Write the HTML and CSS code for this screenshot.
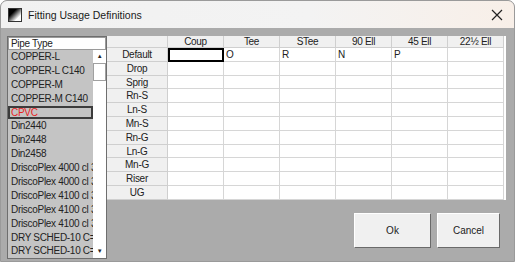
FILE: index.html
```html
<!DOCTYPE html>
<html lang="en">
<head>
    <meta charset="UTF-8">
    <title>Fitting Usage Definitions</title>
    <link rel="stylesheet" href="styles.css">
</head>
<body>

<div class="window">
    <div class="titlebar">
        <span class="app-icon"></span>
        <span class="title">Fitting Usage Definitions</span>
        <svg class="close" width="12" height="12" viewBox="0 0 12 12">
            <path d="M1 1 L11 11 M11 1 L1 11" stroke="#222" stroke-width="1.2" fill="none"/>
        </svg>
    </div>

    <div class="content">
        <div class="listbox">
            <div class="list-header">Pipe Type</div>
            <div class="list-body">
                <div class="list-items">
                    <div class="item">COPPER-L</div>
                    <div class="item">COPPER-L C140</div>
                    <div class="item">COPPER-M</div>
                    <div class="item">COPPER-M C140</div>
                    <div class="item selected">CPVC</div>
                    <div class="item">Din2440</div>
                    <div class="item">Din2448</div>
                    <div class="item">Din2458</div>
                    <div class="item">DriscoPlex 4000 cl 3</div>
                    <div class="item">DriscoPlex 4000 cl 3</div>
                    <div class="item">DriscoPlex 4100 cl 3</div>
                    <div class="item">DriscoPlex 4100 cl 3</div>
                    <div class="item">DriscoPlex 4100 cl 3</div>
                    <div class="item">DRY SCHED-10 C=</div>
                    <div class="item">DRY SCHED-10 C=</div>
                </div>
                <div class="scrollbar">
                    <div class="arrow">&#9650;</div>
                    <div class="thumb"></div>
                    <div class="track"></div>
                    <div class="arrow">&#9660;</div>
                </div>
            </div>
        </div>

        <div class="right">
            <div class="grid">
                <div class="hd corner"></div>
                <div class="hd">Coup</div>
                <div class="hd">Tee</div>
                <div class="hd">STee</div>
                <div class="hd">90 Ell</div>
                <div class="hd">45 Ell</div>
                <div class="hd">22½ Ell</div>

                <div class="rh">Default</div>
                <div class="cell current"></div>
                <div class="cell">O</div>
                <div class="cell">R</div>
                <div class="cell">N</div>
                <div class="cell">P</div>
                <div class="cell"></div>

                <div class="rh">Drop</div>
                <div class="cell"></div><div class="cell"></div><div class="cell"></div><div class="cell"></div><div class="cell"></div><div class="cell"></div>
                <div class="rh">Sprig</div>
                <div class="cell"></div><div class="cell"></div><div class="cell"></div><div class="cell"></div><div class="cell"></div><div class="cell"></div>
                <div class="rh">Rn-S</div>
                <div class="cell"></div><div class="cell"></div><div class="cell"></div><div class="cell"></div><div class="cell"></div><div class="cell"></div>
                <div class="rh">Ln-S</div>
                <div class="cell"></div><div class="cell"></div><div class="cell"></div><div class="cell"></div><div class="cell"></div><div class="cell"></div>
                <div class="rh">Mn-S</div>
                <div class="cell"></div><div class="cell"></div><div class="cell"></div><div class="cell"></div><div class="cell"></div><div class="cell"></div>
                <div class="rh">Rn-G</div>
                <div class="cell"></div><div class="cell"></div><div class="cell"></div><div class="cell"></div><div class="cell"></div><div class="cell"></div>
                <div class="rh">Ln-G</div>
                <div class="cell"></div><div class="cell"></div><div class="cell"></div><div class="cell"></div><div class="cell"></div><div class="cell"></div>
                <div class="rh">Mn-G</div>
                <div class="cell"></div><div class="cell"></div><div class="cell"></div><div class="cell"></div><div class="cell"></div><div class="cell"></div>
                <div class="rh">Riser</div>
                <div class="cell"></div><div class="cell"></div><div class="cell"></div><div class="cell"></div><div class="cell"></div><div class="cell"></div>
                <div class="rh">UG</div>
                <div class="cell"></div><div class="cell"></div><div class="cell"></div><div class="cell"></div><div class="cell"></div><div class="cell"></div>
            </div>

            <div class="btn-container">
                <button class="btn ok">Ok</button>
                <button class="btn cancel">Cancel</button>
            </div>
        </div>
    </div>
</div>

</body>
</html>
```

FILE: styles.css
```css
body {
    margin: 0;
    padding: 0;
    background-color: #ffffff;
    font-family: "Liberation Sans", Arial, sans-serif;
    color: #000;
}

.window {
    width: 515px;
    height: 262px;
    box-sizing: border-box;
    border: 1px solid #9a9a9a;
    border-radius: 7px 7px 0 0;
    overflow: hidden;
    background-color: #ababab;
}

/* barre de titre */
.titlebar {
    height: 27px;
    display: flex;
    align-items: center;
    padding-left: 7px;
    background: linear-gradient(to right, #f1f1f1 0%, #f3f3f3 60%, #f8efe8 100%);
}

.app-icon {
    width: 12px;
    height: 12px;
    border: 1px solid #333;
    background: linear-gradient(135deg, #000 0%, #000 30%, #fff 75%);
}

.title {
    margin-left: 6px;
    font-family: "Liberation Sans", Arial, sans-serif;
    font-size: 10.5px;
    color: #1a1a1a;
}

.close {
    margin-left: auto;
    margin-right: 11px;
}

.content {
    display: flex;
    padding: 8px 0 0 6px;
    font-size: 10px;
    letter-spacing: -0.3px;
    color: #222;
}

/* liste des types */
.listbox {
    width: 98px;
    height: 221px;
    border: 1px solid #6e6e6e;
    display: flex;
    flex-direction: column;
    background-color: #c4c4c4;
}

.list-header {
    height: 11px;
    line-height: 11px;
    background-color: #fff;
    border: 1px solid #9a9a9a;
    padding-left: 2px;
    white-space: nowrap;
}

.list-body {
    flex: 1;
    display: flex;
    overflow: hidden;
}

.list-items {
    flex: 1;
    overflow: hidden;
}

.item {
    height: 13.9px;
    line-height: 13.9px;
    padding-left: 3px;
    white-space: nowrap;
    overflow: hidden;
    box-sizing: border-box;
}

.item.selected {
    color: #e8231e;
    border: 2px solid #3c3c3c;
    padding-left: 1px;
    line-height: 10px;
}

.scrollbar {
    width: 13px;
    background-color: #fff;
    display: flex;
    flex-direction: column;
}

.arrow {
    height: 13px;
    font-size: 6px;
    line-height: 13px;
    text-align: center;
}

.thumb {
    height: 16px;
    border: 1px solid #a0a0a0;
    background-color: #fff;
}

.track {
    flex: 1;
}

/* tableau */
.right {
    flex: 1;
    display: flex;
    flex-direction: column;
}

.grid {
    width: 399px;
    display: grid;
    grid-template-columns: 61px repeat(6, 56px);
    grid-template-rows: 12px repeat(11, 13.8px);
    background-color: #fff;
}

.hd,
.rh {
    background-color: #f0f0f0;
    border-right: 1px solid #cfcfcf;
    border-bottom: 1px solid #cfcfcf;
    text-align: center;
    white-space: nowrap;
    overflow: hidden;
}

.hd {
    line-height: 11px;
}

.rh {
    line-height: 13px;
}

.cell {
    border-right: 1px solid #d6d6d6;
    border-bottom: 1px solid #d6d6d6;
    padding-left: 2px;
    line-height: 13px;
}

.cell.current {
    border: 2px solid #000;
}

.btn-container {
    display: flex;
    justify-content: flex-end;
    gap: 6px;
    margin-top: 13px;
    padding-right: 14px;
}

.btn {
    height: 35px;
    background-color: #f0f0f0;
    border: 1px solid;
    border-color: #fff #6a6a6a #6a6a6a #fff;
    font-family: "Liberation Sans", Arial, sans-serif;
    font-size: 10px;
    color: #222;
    padding: 0;
}

.ok {
    width: 77px;
}

.cancel {
    width: 63px;
}
```
